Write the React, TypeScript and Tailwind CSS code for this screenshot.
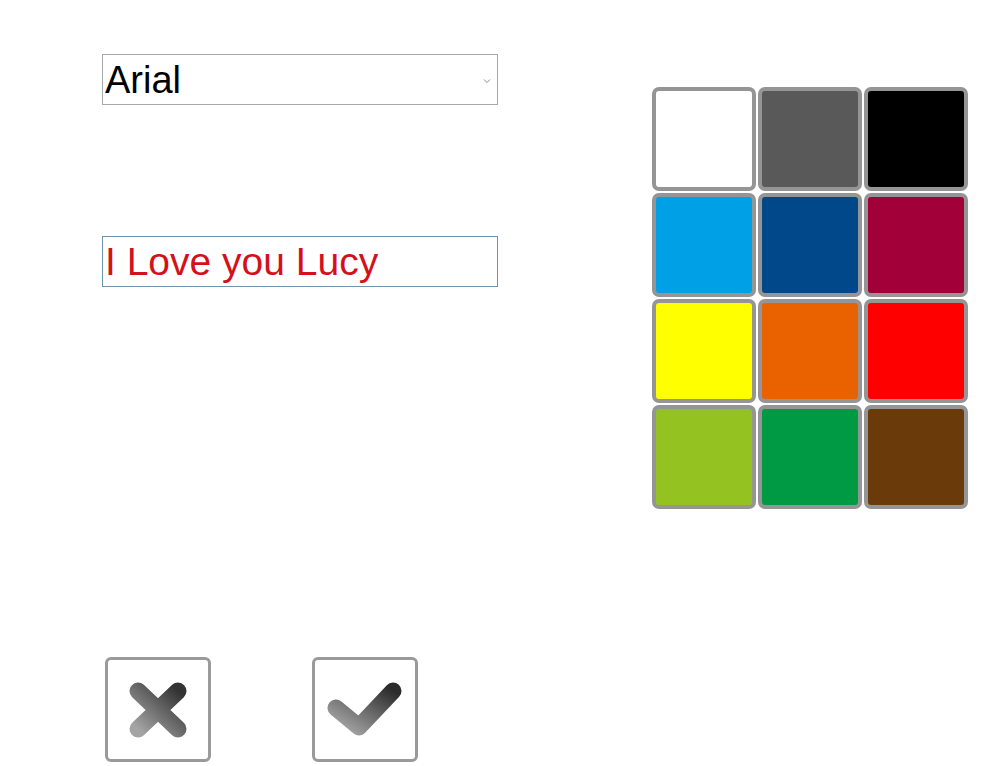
import React from "react";

const colors = [
  "#ffffff", "#595959", "#000000",
  "#00a0e6", "#00488a", "#a20038",
  "#ffff00", "#ea6200", "#ff0000",
  "#94c221", "#009a44", "#6a3a0a",
];

function XIcon() {
  return (
    <svg width="58" height="56" viewBox="0 0 58 56">
      <defs>
        <linearGradient id="gx" x1="0" y1="1" x2="1" y2="0">
          <stop offset="0" stopColor="#a4a4a4" />
          <stop offset="1" stopColor="#333333" />
        </linearGradient>
      </defs>
      <path d="M9 9 L49 47 M49 9 L9 47" stroke="url(#gx)" strokeWidth="17" strokeLinecap="round" fill="none" />
    </svg>
  );
}

function CheckIcon() {
  return (
    <svg width="76" height="56" viewBox="0 0 76 56">
      <defs>
        <linearGradient id="gc" x1="0" y1="1" x2="1" y2="0">
          <stop offset="0" stopColor="#a8a8a8" />
          <stop offset="1" stopColor="#2c2c2c" />
        </linearGradient>
      </defs>
      <path d="M9 26 L32 45 L66 9" stroke="url(#gc)" strokeWidth="17" strokeLinecap="round" strokeLinejoin="round" fill="none" />
    </svg>
  );
}

export default function App() {
  return (
    <div className="w-[1000px] h-[766px] bg-white flex overflow-hidden" style={{ fontFamily: '"Liberation Sans", Arial, sans-serif' }}>
      <div className="ml-[102px] w-[396px] flex flex-col pt-[54px]">
        <div className="h-[51px] border border-[#a8a8a8] flex items-center justify-between pl-[2px] pr-[6px]">
          <span className="text-[38px] leading-none text-black">Arial</span>
          <svg width="8" height="6" viewBox="0 0 8 6" className="mt-[2px]">
            <path d="M1 1.5 L4 4.5 L7 1.5" stroke="#8a8a8a" strokeWidth="1" fill="none" />
          </svg>
        </div>
        <div className="mt-[131px] h-[51px] border border-[#6f93ab] flex items-center pl-[2px]">
          <span className="text-[39px] leading-none text-[#d4111b]">I Love you Lucy</span>
        </div>
        <div className="mt-[370px] ml-[3px] flex gap-[101px]">
          <button className="w-[106px] h-[105px] border-[3px] border-[#9a9a9a] rounded-[6px] bg-white flex items-center justify-center">
            <XIcon />
          </button>
          <button className="w-[106px] h-[105px] border-[3px] border-[#9a9a9a] rounded-[6px] bg-white flex items-center justify-center">
            <CheckIcon />
          </button>
        </div>
      </div>
      <div className="ml-[154px] mt-[87px] grid grid-cols-[104px_104px_104px] gap-[2px] self-start">
        {colors.map((c, i) => (
          <div
            key={i}
            className="w-[104px] h-[104px] border-[4px] border-[#959595] rounded-[7px]"
            style={{ backgroundColor: c }}
          />
        ))}
      </div>
    </div>
  );
}
